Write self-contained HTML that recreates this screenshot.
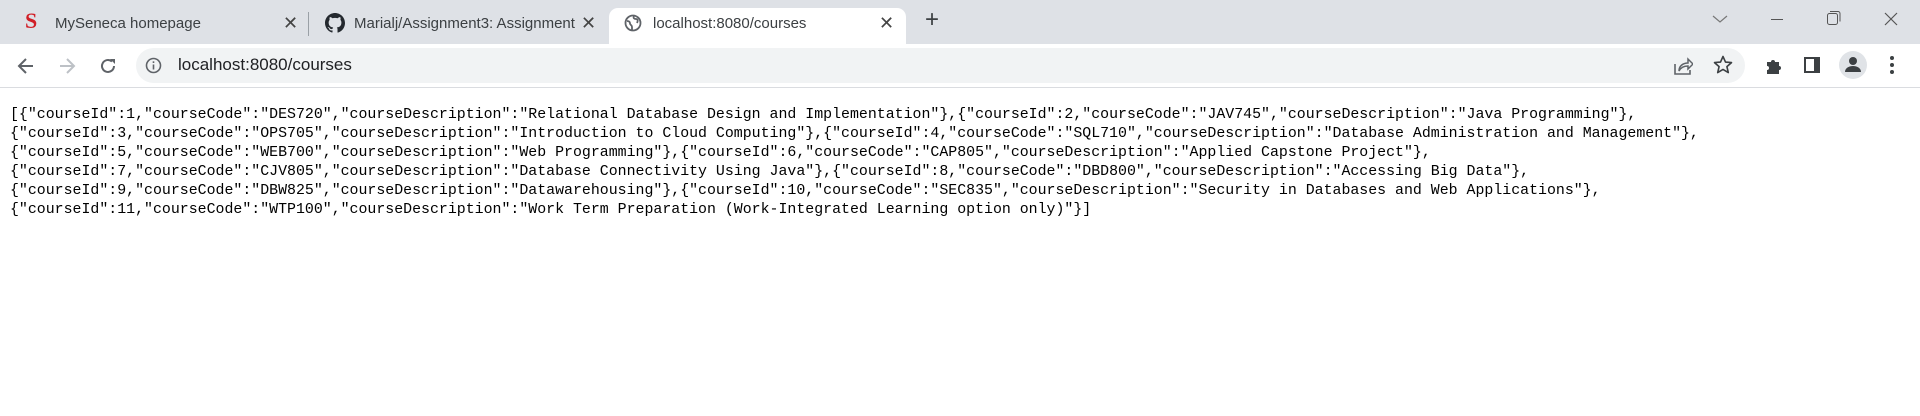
<!DOCTYPE html>
<html><head><style>
*{margin:0;padding:0;box-sizing:border-box}
body{width:1920px;height:416px;background:#fff;position:relative;overflow:hidden;font-family:"Liberation Sans",sans-serif}
.strip{position:absolute;left:0;top:0;width:1920px;height:44px;background:#dee1e6}
.tab{position:absolute;top:8px;height:36px;font-size:15px;color:#3c4043;line-height:28px}
.active{background:#fff;border-radius:9px 9px 0 0}
.t{position:absolute;top:2px;white-space:nowrap;overflow:hidden}
.x{position:absolute;top:1px;font-size:18px;color:#444}
.tool{position:absolute;top:44px;left:0;width:1920px;height:44px;background:#fff;border-bottom:1px solid #dadce0}
.omni{position:absolute;left:136px;top:4px;width:1609px;height:35px;background:#f1f3f4;border-radius:18px}
pre{position:absolute;left:10px;top:106px;font-family:"Liberation Mono",monospace;font-size:14.9px;line-height:19px;color:#000;white-space:pre}
</style></head><body>
<div class="strip"></div>
<div class="tab" style="left:0;width:308px">
 <span style="position:absolute;left:25px;top:-1px;color:#d11f27;font-weight:bold;font-size:22px;font-family:'Liberation Serif',serif">S</span>
 <span class="t" style="left:55px">MySeneca homepage</span>
 <span class="x" style="left:283px">✕</span>
</div>
<div style="position:absolute;left:308px;top:12px;width:1px;height:24px;background:#9aa0a6"></div>
<div class="tab" style="left:309px;width:300px">
 <svg style="position:absolute;left:16px;top:5px" width="20" height="20" viewBox="0 0 16 16"><path fill="#24292f" d="M8 0C3.58 0 0 3.58 0 8c0 3.54 2.29 6.530 5.470 7.59.4.07.55-.17.55-.38v-1.33c-2.23.48-2.7-1.07-2.7-1.07-.36-.92-.89-1.17-.89-1.17-.73-.5.05-.49.05-.49.81.06 1.23.83 1.23.83.72 1.23 1.880.87 2.34.67.07-.52.28-.87.51-1.07-1.78-.2-3.64-.89-3.64-3.95 0-.87.31-1.59.83-2.150-.08-.2-.36-1.02.08-2.12 0 0 .67-.21 2.2.82a7.6 7.6 0 014 0c1.53-1.04 2.2-.82 2.2-.82.44 1.1.16 1.92.08 2.12.51.56.82 1.27.82 2.15 0 3.07-1.87 3.75-3.65 3.95.29.25.54.73.54 1.48v2.2c0 .21.15.46.55.38A8 8 0 0016 8c0-4.42-3.58-8-8-8z"/></svg>
 <span class="t" style="left:45px;width:224px">Marialj/Assignment3: Assignment</span>
 <span class="x" style="left:272px">✕</span>
</div>
<div class="tab active" style="left:609px;width:297px">
 <svg style="position:absolute;left:15px;top:6px" width="18" height="18" viewBox="0 0 18 18"><circle cx="9" cy="9" r="7.5" fill="none" stroke="#5f6368" stroke-width="1.8"/><path d="M3 7c2 0 3 1 3 2.5S8 11 8 13v3M10 2c-1 2 0 3 2 3s2 2 1 4" stroke="#5f6368" stroke-width="1.8" fill="none"/></svg>
 <span class="t" style="left:44px">localhost:8080/courses</span>
 <span class="x" style="left:270px">✕</span>
</div>
<div style="position:absolute;left:925px;top:6px;font-size:24px;color:#3c4043">+</div>
<svg style="position:absolute;left:1712px;top:14px" width="16" height="10"><path d="M1 2l7 6 7-6" stroke="#777" stroke-width="1.2" fill="none"/></svg>
<div style="position:absolute;left:1771px;top:19px;width:12px;height:1px;background:#555"></div>
<svg style="position:absolute;left:1827px;top:11px" width="14" height="14"><rect x="0.5" y="2.5" width="10" height="11" rx="2" stroke="#555" fill="none"/><path d="M3 0.5h8a2 2 0 012 2v8" stroke="#555" fill="none"/></svg>
<svg style="position:absolute;left:1884px;top:12px" width="14" height="14"><path d="M1 1l12 12M13 1L1 13" stroke="#555" stroke-width="1.2"/></svg>
<div class="tool">
 <svg style="position:absolute;left:17px;top:13px" width="18" height="18"><path d="M16 9H3M9 2L2 9l7 7" stroke="#5f6368" stroke-width="2" fill="none"/></svg>
 <svg style="position:absolute;left:58px;top:13px" width="18" height="18"><path d="M2 9h13M9 2l7 7-7 7" stroke="#bdc1c6" stroke-width="2" fill="none"/></svg>
 <svg style="position:absolute;left:99px;top:13px" width="18" height="18"><path d="M15 9a6 6 0 11-2-4.5" stroke="#5f6368" stroke-width="2" fill="none"/><path d="M11 2h5v5z" fill="#5f6368"/></svg>
 <div class="omni">
  <svg style="position:absolute;left:9px;top:9px" width="17" height="17"><circle cx="8.5" cy="8.5" r="7" stroke="#5f6368" stroke-width="1.6" fill="none"/><rect x="7.7" y="7.5" width="1.6" height="5" fill="#5f6368"/><rect x="7.7" y="4.3" width="1.6" height="1.7" fill="#5f6368"/></svg>
  <span style="position:absolute;left:42px;top:7px;font-size:17px;color:#202124">localhost:8080/courses</span>
  <svg style="position:absolute;left:1537px;top:8px" width="20" height="20"><path d="M2 8v10h15v-4" stroke="#5f6368" stroke-width="1.6" fill="none"/><path d="M6 15c0-5 4-8 9-8V3l5 5-5 5V10c-4 0-7 1-9 5z" stroke="#5f6368" stroke-width="1.5" fill="none"/></svg>
  <svg style="position:absolute;left:1577px;top:7px" width="20" height="20"><path d="M10 1.5l2.5 5.6 6 .5-4.6 4 1.4 6-5.3-3.2-5.3 3.2 1.4-6-4.6-4 6-.5z" stroke="#3c4043" stroke-width="1.6" fill="none" stroke-linejoin="round"/></svg>
 </div>
 <svg style="position:absolute;left:1764px;top:13px" width="18" height="18"><path d="M3 5h4a2 2 0 114 0h4v4a2 2 0 110 4v4H3v-4a2 2 0 100-4z" fill="#3c4043"/></svg>
 <svg style="position:absolute;left:1803px;top:12px" width="18" height="18"><rect x="1" y="1" width="16" height="16" fill="#3c4043"/><rect x="3" y="3" width="8" height="12" fill="#fff"/></svg>
 <div style="position:absolute;left:1839px;top:7px;width:28px;height:28px;border-radius:50%;background:#e0e3e7"></div>
 <svg style="position:absolute;left:1844px;top:11px" width="18" height="18"><circle cx="9" cy="6" r="4" fill="#3c4043"/><path d="M1 17c0-4 4-6 8-6s8 2 8 6z" fill="#3c4043"/></svg>
 <svg style="position:absolute;left:1889px;top:11px" width="6" height="20"><circle cx="3" cy="3" r="2" fill="#3c4043"/><circle cx="3" cy="10" r="2" fill="#3c4043"/><circle cx="3" cy="17" r="2" fill="#3c4043"/></svg>
</div>
<pre>[{"courseId":1,"courseCode":"DES720","courseDescription":"Relational Database Design and Implementation"},{"courseId":2,"courseCode":"JAV745","courseDescription":"Java Programming"},
{"courseId":3,"courseCode":"OPS705","courseDescription":"Introduction to Cloud Computing"},{"courseId":4,"courseCode":"SQL710","courseDescription":"Database Administration and Management"},
{"courseId":5,"courseCode":"WEB700","courseDescription":"Web Programming"},{"courseId":6,"courseCode":"CAP805","courseDescription":"Applied Capstone Project"},
{"courseId":7,"courseCode":"CJV805","courseDescription":"Database Connectivity Using Java"},{"courseId":8,"courseCode":"DBD800","courseDescription":"Accessing Big Data"},
{"courseId":9,"courseCode":"DBW825","courseDescription":"Datawarehousing"},{"courseId":10,"courseCode":"SEC835","courseDescription":"Security in Databases and Web Applications"},
{"courseId":11,"courseCode":"WTP100","courseDescription":"Work Term Preparation (Work-Integrated Learning option only)"}]</pre>
</body></html>
